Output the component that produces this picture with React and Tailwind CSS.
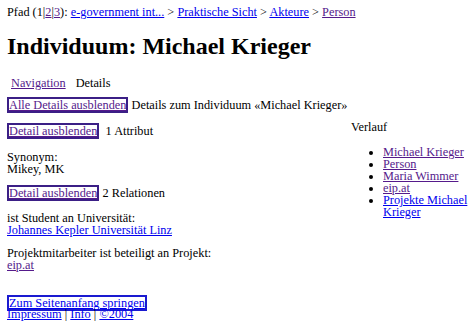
const visited = 'text-[#551a8b] underline'
const fresh = 'text-[#0000ee] underline'

function BoxLink({ children, color = visited, border = 'border-[#3b1f86]' }) {
  return (
    <a href="#" className={`${color} border-2 ${border} leading-[12px] inline-block`}>
      {children}
    </a>
  )
}

const history = [
  { label: 'Michael Krieger', seen: true },
  { label: 'Person', seen: true },
  { label: 'Maria Wimmer', seen: true },
  { label: 'eip.at', seen: true },
  { label: 'Projekte Michael Krieger', seen: false },
]

export default function App() {
  return (
    <div className="w-[474px] h-[332px] overflow-hidden bg-white text-black text-[12.3px] leading-[12px] font-['Liberation_Serif',serif] pl-[7px] pt-[6px]">
      <div>
        Pfad (1|<a href="#" className={visited}>2</a>|<a href="#" className={visited}>3</a>):{' '}
        <a href="#" className={fresh}>e-government int...</a> &gt;{' '}
        <a href="#" className={fresh}>Praktische Sicht</a> &gt;{' '}
        <a href="#" className={fresh}>Akteure</a> &gt;{' '}
        <a href="#" className={visited}>Person</a>
      </div>

      <h1 className="text-[24px] leading-[28px] font-bold mt-[14px]">Individuum: Michael Krieger</h1>

      <div className="mt-[17px] flex gap-[10px] pl-[4px]">
        <a href="#" className={visited}>Navigation</a>
        <span>Details</span>
      </div>

      <div className="mt-[8px]">
        <BoxLink>Alle Details ausblenden</BoxLink> Details zum Individuum «Michael Krieger»
      </div>

      <div className="flex">
        <div className="w-[344px] shrink-0">
          <div className="mt-[10px]">
            <BoxLink>Detail ausblenden</BoxLink>&nbsp; 1 Attribut
          </div>
          <div className="mt-[12px]">
            Synonym:
            <br />
            Mikey, MK
          </div>
          <div className="mt-[10px]">
            <BoxLink>Detail ausblenden</BoxLink> 2 Relationen
          </div>
          <div className="mt-[11px]">
            ist Student an Universität:
            <br />
            <a href="#" className={fresh}>Johannes Kepler Universität Linz</a>
          </div>
          <div className="mt-[11px]">
            Projektmitarbeiter ist beteiligt an Projekt:
            <br />
            <a href="#" className={visited}>eip.at</a>
          </div>
        </div>

        <div className="w-[123px] shrink-0 pt-[8px]">
          <div>Verlauf</div>
          <ul className="mt-[13px] pl-[32px] list-disc">
            {history.map((item) => (
              <li key={item.label}>
                <a href="#" className={item.seen ? visited : fresh}>{item.label}</a>
              </li>
            ))}
          </ul>
        </div>
      </div>

      <div className="mt-[24px]">
        <BoxLink color={fresh} border="border-[#1a1ad0]">Zum Seitenanfang springen</BoxLink>
        <div className="-mt-[3px]">
          <a href="#" className={fresh}>Impressum</a> | <a href="#" className={fresh}>Info</a> |{' '}
          <a href="#" className={fresh}>©2004</a>
        </div>
      </div>
    </div>
  )
}
